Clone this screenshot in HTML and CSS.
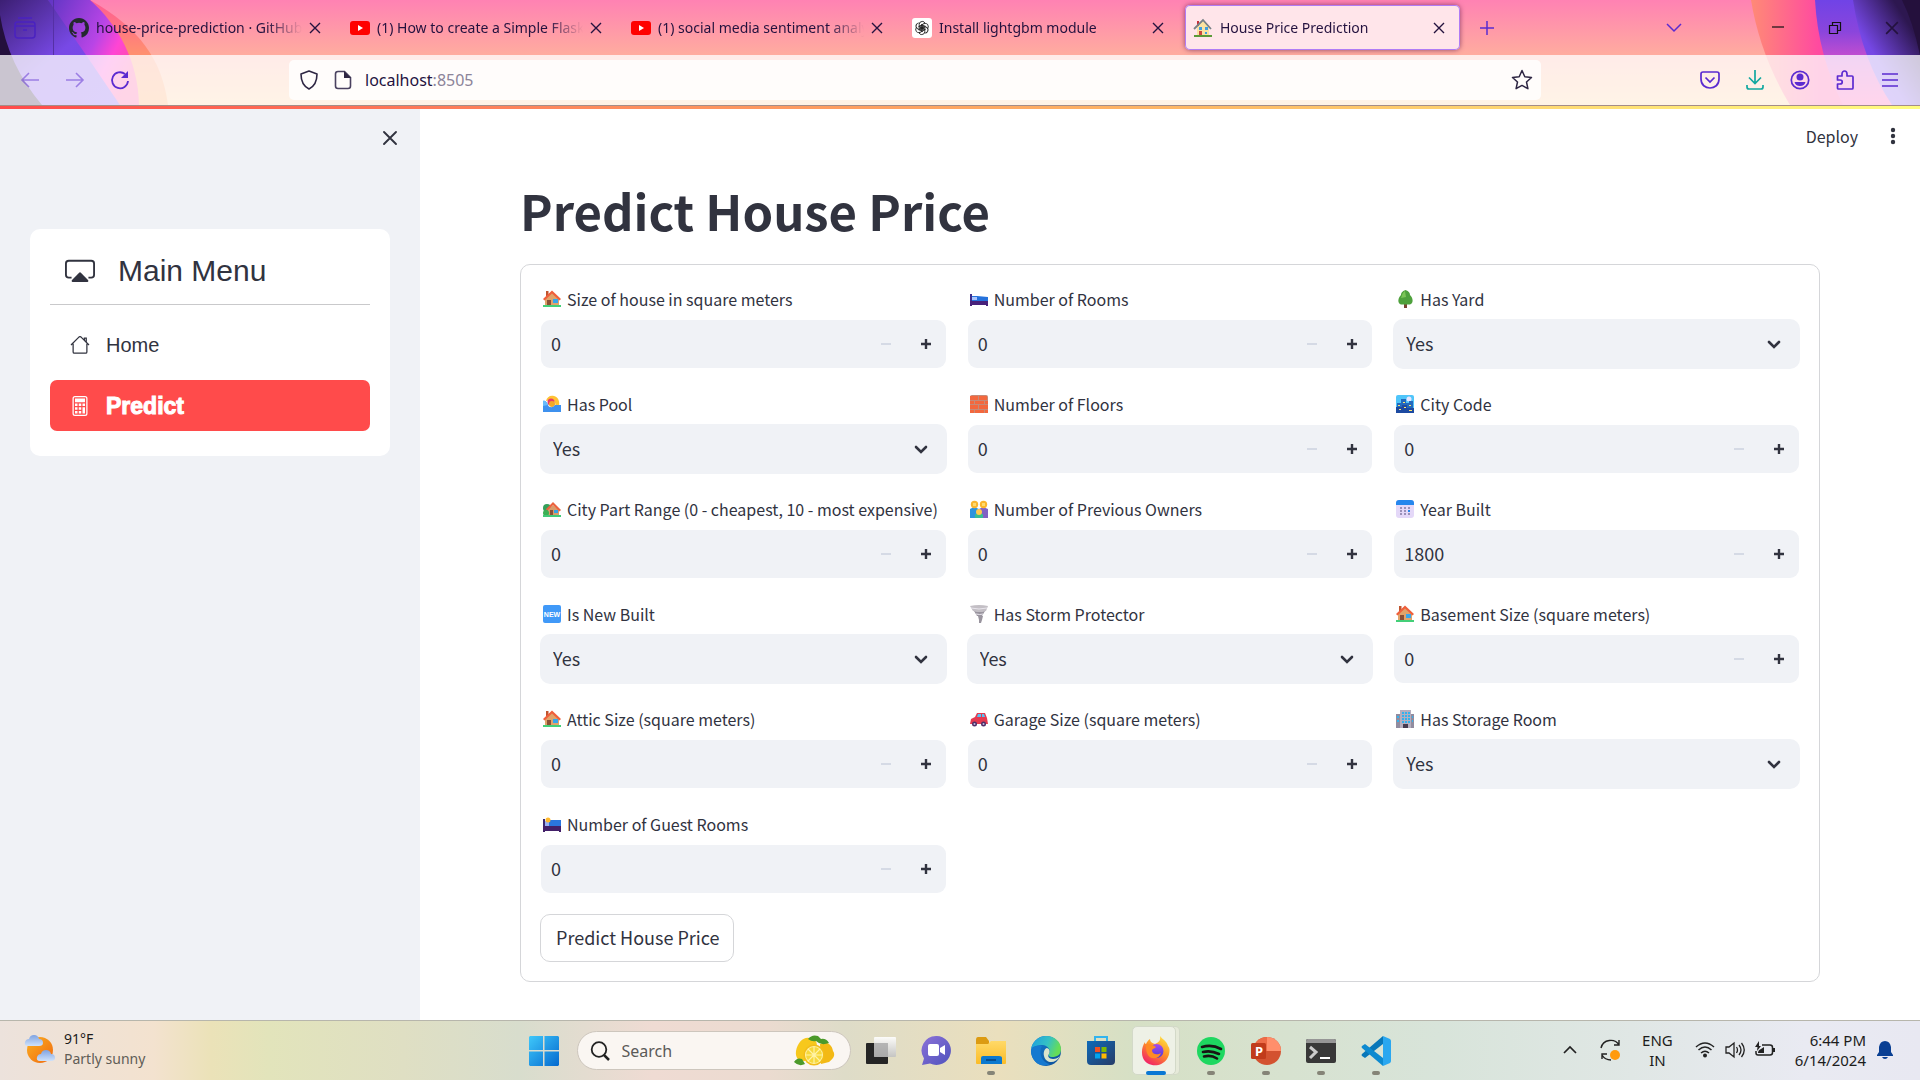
FILE: index.html
```html
<!DOCTYPE html>
<html lang="en">
<head>
<meta charset="utf-8">
<title>House Price Prediction</title>
<link rel="stylesheet" href="styles.css">
</head>
<body>
<svg class="defs" aria-hidden="true">
  <defs>
    <linearGradient id="violet" x1="0" y1="0" x2="1" y2="1"><stop offset="0" stop-color="#3c1f73"/><stop offset=".5" stop-color="#7849e6"/><stop offset="1" stop-color="#7b4bee"/></linearGradient>
    <linearGradient id="magenta" x1="0" y1="0" x2="1" y2=".6"><stop offset="0" stop-color="#5f35c4"/><stop offset=".55" stop-color="#b845e6"/><stop offset=".75" stop-color="#ff45d4"/><stop offset="1" stop-color="#ff4f9a"/></linearGradient>
    <linearGradient id="coral" x1="0" y1="0" x2="0" y2="1"><stop offset="0" stop-color="#ff5a94"/><stop offset=".5" stop-color="#ff8f70"/><stop offset="1" stop-color="#ffa860"/></linearGradient>
    <linearGradient id="hot" x1="0" y1="0" x2="1" y2="0"><stop offset="0" stop-color="#ff8a76"/><stop offset=".4" stop-color="#ff4aa0"/><stop offset="1" stop-color="#ff4aa0"/></linearGradient>
    <linearGradient id="plum" x1="0" y1="0" x2="0" y2="1"><stop offset="0" stop-color="#7043e6"/><stop offset=".3" stop-color="#8a45dc"/><stop offset=".6" stop-color="#d050cc"/><stop offset="1" stop-color="#ff50b0"/></linearGradient>
    <linearGradient id="deep" x1="1" y1="0" x2="0" y2="1"><stop offset=".2" stop-color="#2d1750"/><stop offset=".6" stop-color="#7547e4"/><stop offset="1" stop-color="#8a55ff"/></linearGradient>
    <linearGradient id="win" x1="0" y1="0" x2="1" y2="1"><stop offset="0" stop-color="#3fc8fa"/><stop offset="1" stop-color="#0469cf"/></linearGradient>
    <linearGradient id="sun" x1="0" y1="0" x2="1" y2="1"><stop offset="0" stop-color="#fbb022"/><stop offset="1" stop-color="#f0690f"/></linearGradient>
    <linearGradient id="cloud" x1="0" y1="0" x2="0" y2="1"><stop offset="0" stop-color="#7fa3e2"/><stop offset="1" stop-color="#cfe2fb"/></linearGradient>
    <linearGradient id="chat" x1="0" y1="0" x2="1" y2="1"><stop offset="0" stop-color="#8c72d8"/><stop offset="1" stop-color="#4f52bd"/></linearGradient>
    <linearGradient id="folder" x1="0" y1="0" x2="0" y2="1"><stop offset="0" stop-color="#ffd968"/><stop offset="1" stop-color="#fbbc27"/></linearGradient>
    <linearGradient id="edgeA" x1="0" y1="0" x2="1" y2=".3"><stop offset="0" stop-color="#1b9de2"/><stop offset=".6" stop-color="#35c1c4"/><stop offset="1" stop-color="#66dd57"/></linearGradient>
    <linearGradient id="edgeB" x1="0" y1="0" x2="1" y2="1"><stop offset="0" stop-color="#1583d8"/><stop offset="1" stop-color="#0c4a94"/></linearGradient>
    <linearGradient id="store" x1="0" y1="0" x2="1" y2="1"><stop offset="0" stop-color="#0f6ab8"/><stop offset="1" stop-color="#273c68"/></linearGradient>
    <linearGradient id="fox" x1=".8" y1="0" x2=".2" y2="1"><stop offset="0" stop-color="#ffe443"/><stop offset=".45" stop-color="#ff9125"/><stop offset="1" stop-color="#f0186e"/></linearGradient>
    <linearGradient id="globe" x1="0" y1="0" x2="0" y2="1"><stop offset="0" stop-color="#a54bf0"/><stop offset="1" stop-color="#4e3ad4"/></linearGradient>
    <linearGradient id="view" x1="0" y1="0" x2="0" y2="1"><stop offset="0" stop-color="#ffffff"/><stop offset="1" stop-color="#c2c2c2"/></linearGradient>

    <symbol id="x" viewBox="0 0 12 12"><path d="M1 1l10 10M11 1L1 11" fill="none" stroke="currentColor" stroke-width="1.4"/></symbol>
    <symbol id="youtube" viewBox="0 0 20 20"><rect y="3" width="20" height="14" rx="3" fill="#f00"/><path d="M8 7l5 3-5 3z" fill="#fff"/></symbol>
    <symbol id="minus" viewBox="0 0 10 10"><path d="M0 5h10" stroke="currentColor" stroke-width="2"/></symbol>
    <symbol id="plus" viewBox="0 0 10 10"><path d="M0 5h10M5 0v10" stroke="currentColor" stroke-width="2.4"/></symbol>
    <symbol id="down" viewBox="0 0 14 9"><path d="M2 2l5 5 5-5" fill="none" stroke="currentColor" stroke-width="2.600" stroke-linecap="round"/></symbol>

    <symbol id="e-house" viewBox="0 0 18 18"><path d="M3 1h2.500v5H3z" fill="#c0552f"/><path d="M2 8l7-6 7 6v8H2z" fill="#e0a36a"/><path d="M0 9l9-8.500L18 9l-1.500 1.500L9 3.600 1.500 10.500z" fill="#ef5f3c"/><path d="M4 10h4v6H4z" fill="#8a4f36"/><path d="M10 9h5v4h-5z" fill="#38a5ea"/><path d="M0 15h18v2H0z" fill="#44cf78"/></symbol>
    <symbol id="e-garden" viewBox="0 0 18 18"><circle cx="4" cy="8" r="4" fill="#35a05a"/><path d="M5 9l5-4 6 5v6H5z" fill="#d99b69"/><path d="M3 9l7-7 8 8-1.500 1.500L10 5l-6 6z" fill="#ec623f"/><path d="M7 10h3v6H7z" fill="#8a5038"/><path d="M11 10h4v3h-4z" fill="#36a2e4"/><circle cx="3" cy="13" r="3" fill="#3bb054"/><path d="M0 15h18v2H0z" fill="#42c978"/></symbol>
    <symbol id="e-bed" viewBox="0 0 18 18"><path d="M0 4h2v11H0z" fill="#3c2f8d"/><path d="M2 6h5l11 1v5H2z" fill="#2572dc"/><path d="M2 7h5v3H2z" fill="#a9c6ff"/><path d="M0 11h18v5h-2v-1H2v1H0z" fill="#48217a"/></symbol>
    <symbol id="e-guest" viewBox="0 0 18 18"><path d="M0 4h2v12H0z" fill="#3c2a70"/><path d="M2 6h4v6H2z" fill="#9ab1f4"/><path d="M6 5h12v7H6z" fill="#2a76de"/><circle cx="5" cy="5" r="2.500" fill="#ffb92e"/><path d="M0 11h18v6h-2v-1H2v1H0z" fill="#432069"/></symbol>
    <symbol id="e-tree" viewBox="0 0 18 18"><path d="M8 12h3v6H8z" fill="#7a4434"/><path d="M9.500 0C6 1 5 3 5 5c-4 4-3 9 0 9.500h9c3-.5 4-5.500 0-9.500 0-2-1-4-4.500-5z" fill="#4ea13c"/><path d="M9 1C6 3 6 6 5 8l5-1z" fill="#7bc557"/></symbol>
    <symbol id="e-pool" viewBox="0 0 18 18"><path d="M3 6C4 2 7 0 11 1c4 1 6 5 5 10l-4 1c1-3 0-6-3-7z" fill="#ffc233"/><circle cx="8" cy="7" r="3.500" fill="#e73c68"/><circle cx="9" cy="9" r="3" fill="#f2a928"/><path d="M0 6c2-1 4 1 5 4s5 3 7 0h6v7H0z" fill="#3e91ee"/><path d="M0 6c2-1 4 1 5 4l-5 1z" fill="#68bbfa"/></symbol>
    <symbol id="e-brick" viewBox="0 0 18 18"><rect width="18" height="18" rx="2" fill="#c58a78"/><path d="M0 1h8v4H0zM9 1h8v4H9zM0 6h4v3H0zM5 6h9v3H5zM15 6h3v3h-3zM0 10h8v4H0zM9 10h9v4H9zM0 15h4v3H0zM5 15h9v3H5zM15 15h3v3h-3z" fill="#f3683e"/></symbol>
    <symbol id="e-city" viewBox="0 0 18 18"><rect width="18" height="18" rx="2" fill="#4fc5fa"/><circle cx="13" cy="4" r="2.500" fill="#e8e5ff"/><path d="M1 8h4V4h5v4h3V6h4v12H1z" fill="#2369bd"/><path d="M0 12h6v-2h5v3h7v5H0z" fill="#1c4aa1"/><path d="M2 10h2v1H2zM7 7h2v1H7zM13 10h2v1h-2zM8 12h2v1H8zM3 14h2v1H3zM13 15h3v1h-3z" fill="#ffe36c"/></symbol>
    <symbol id="e-family" viewBox="0 0 18 18"><path d="M0 9l4-2 5 2v9H0z" fill="#2c93dd"/><path d="M9 9l4-2 5 2v9H9z" fill="#8161c4"/><circle cx="4.500" cy="4.500" r="3.700" fill="#f9b630"/><circle cx="13.500" cy="4.500" r="3.700" fill="#fcb52c"/><path d="M3 3h3v3H3zM12 3h3v3h-3z" fill="#ffda6e"/><path d="M5 14h8v4H5z" fill="#38bd93"/><circle cx="9" cy="12" r="3" fill="#ffc94c"/></symbol>
    <symbol id="e-calendar" viewBox="0 0 18 18"><rect width="18" height="18" rx="3" fill="#e4d8f8"/><path d="M0 5V3q0-3 3-3h12q3 0 3 3v2z" fill="#2586ed"/><path d="M4 7h2v2H4zM8 7h2v2H8zM12 7h2v2h-2zM4 10h2v2H4zM8 10h2v2H8zM4 13h2v2H4zM8 13h2v2H8zM12 13h2v2h-2z" fill="#9b91b9"/><path d="M12 10h2v2h-2z" fill="#2586ed"/></symbol>
    <symbol id="e-new" viewBox="0 0 18 18"><rect width="18" height="18" rx="2" fill="#4099f8"/><text x="9" y="12" class="new-sign">NEW</text></symbol>
    <symbol id="e-storm" viewBox="0 0 18 18"><path d="M0 1q9-2 18 0l-2 5q-6 2-13 0z" fill="#c3bfc5"/><path d="M4 6q6 2 11 0l-3 5H7zM8 11h5l-1 4H9zM9 15h3l-1 3H9z" fill="#99949e"/><path d="M1 3q8 2 16 0M6 9q4 1 7 0" fill="none" stroke="#e9e6ed"/></symbol>
    <symbol id="e-car" viewBox="0 0 18 18"><path d="M1 9l4-2 2-4h8l2 5 1 6H0z" fill="#e43a50"/><path d="M7 7l1-3h3v3zM12 4h2l1 3h-3z" fill="#54c2f3"/><circle cx="4.500" cy="14" r="2.500" fill="#4d2f68"/><circle cx="13.500" cy="14" r="2.500" fill="#4d2f68"/><circle cx="4.500" cy="14" r="1" fill="#c7b8dd"/><circle cx="13.500" cy="14" r="1" fill="#c7b8dd"/></symbol>
    <symbol id="e-office" viewBox="0 0 18 18"><path d="M0 4h18v14H0z" fill="#918c9f"/><path d="M4 0h11v18H4z" fill="#b5aebf"/><path d="M6 2h2v2H6zM9 2h2v2H9zM12 2h2v2h-2zM6 5h2v2H6zM9 5h2v2H9zM12 5h2v2h-2zM6 8h2v2H6zM9 8h2v2H9zM12 8h2v2h-2zM6 11h2v2H6zM9 11h2v2H9zM12 11h2v2h-2zM1 6h2v2H1zM1 10h2v2H1zM16 6h1v2h-1zM16 10h1v2h-1z" fill="#33b2ee"/><path d="M7 14h5v4H7z" fill="#453b50"/></symbol>
  </defs>
</svg>

<header class="browser">
  <svg class="theme theme-left" width="170" height="105" aria-hidden="true">
    <path d="M70 0H90C140 28 162 60 168 105H70z" fill="url(#coral)"/>
    <path d="M48 0H90C118 25 138 60 139 105H60z" fill="url(#magenta)"/>
    <path d="M0 0H48L86 55 120 105H0z" fill="url(#violet)"/>
    <path d="M0 15Q8 65 42 105H0z" fill="#24103c"/>
  </svg>
  <svg class="theme theme-right" width="170" height="105" aria-hidden="true">
    <path d="M1 0H170V105H40Q10 55 1 0z" fill="url(#hot)"/>
    <path d="M65 0H170V105H93Q68 55 65 0z" fill="url(#plum)"/>
    <path d="M103 0H170V105H142Q112 60 103 0z" fill="url(#deep)"/>
    <path d="M152 0H170V55Q163 22 152 0z" fill="#24103c"/>
  </svg>

  <div class="tabstrip">
    <button class="recent" aria-label="Recent browsing"><svg width="22" height="22" viewBox="0 0 22 22" fill="none" stroke="#4a22c0" stroke-width="1.500"><path d="M4 1h14M3 5h16q2 0 2 3v10q0 3-3 3H4q-3 0-3-3V8q0-3 2-3zM1 9h20M9 13h4"/></svg></button>
    <nav class="tabs" aria-label="Tabs">
      <div class="tab"><svg width="20" height="20" viewBox="0 0 16 16"><path fill="#24292f" d="M8 0C3.580 0 0 3.580 0 8c0 3.540 2.290 6.530 5.470 7.590.4.070.55-.17.55-.38 0-.19-.01-.82-.01-1.490-2.010.37-2.530-.49-2.690-.94-.09-.23-.48-.94-.82-1.130-.28-.15-.68-.52-.01-.53.63-.01 1.080.58 1.230.82.720 1.210 1.870.87 2.330.66.070-.52.280-.87.510-1.070-1.780-.2-3.640-.89-3.640-3.950 0-.87.310-1.590.820-2.150-.08-.2-.36-1.020.08-2.120 0 0 .67-.21 2.200.82a7.600 7.600 0 0 1 4 0c1.530-1.040 2.200-.82 2.200-.82.440 1.100.160 1.920.080 2.120.510.560.820 1.270.820 2.150 0 3.070-1.870 3.750-3.650 3.950.290.250.540.730.540 1.480 0 1.070-.01 1.930-.01 2.200 0 .21.150.46.550.38A8 8 0 0 0 16 8c0-4.420-3.580-8-8-8z"/></svg><a class="tab-name" href="#">house-price-prediction · GitHub</a><button class="tab-close" aria-label="Close tab"><svg width="12" height="12"><use href="#x"/></svg></button></div>
      <div class="tab"><svg width="20" height="20"><use href="#youtube"/></svg><a class="tab-name" href="#">(1) How to create a Simple Flask</a><button class="tab-close" aria-label="Close tab"><svg width="12" height="12"><use href="#x"/></svg></button></div>
      <div class="tab"><svg width="20" height="20"><use href="#youtube"/></svg><a class="tab-name" href="#">(1) social media sentiment analy</a><button class="tab-close" aria-label="Close tab"><svg width="12" height="12"><use href="#x"/></svg></button></div>
      <div class="tab"><svg width="20" height="20" viewBox="0 0 20 20"><rect width="20" height="20" rx="3" fill="#fff"/><g fill="none" stroke="#222" stroke-width=".9"><path id="petal" d="M7.200 12.500V6.300q.3-2.800 3-2.900 2 0 3 1.800M7.200 8l5.200 3"/><use href="#petal" transform="rotate(60 10 10)"/><use href="#petal" transform="rotate(120 10 10)"/><use href="#petal" transform="rotate(180 10 10)"/><use href="#petal" transform="rotate(240 10 10)"/><use href="#petal" transform="rotate(300 10 10)"/></g></svg><a class="tab-name" href="#">Install lightgbm module</a><button class="tab-close" aria-label="Close tab"><svg width="12" height="12"><use href="#x"/></svg></button></div>
      <div class="tab tab-active"><svg width="20" height="20" viewBox="0 0 20 20"><path d="M4 8l6-5 6 5v10H4z" fill="#fbe3a2"/><path d="M4 3h2v5H4z" fill="#c62f3a"/><path d="M1 11l9-9 8 9" fill="none" stroke="#788086" stroke-width="1.800"/><path d="M6 9h3v3H6zM12 9h3v3h-3zM12 14h2v2h-2z" fill="#3f9ee0"/><path d="M6 13h3v5H6z" fill="#c9473e"/><path d="M1 17h18v2H1z" fill="#5b9a38"/></svg><a class="tab-name" href="#" aria-current="page">House Price Prediction</a><button class="tab-close" aria-label="Close tab"><svg width="12" height="12"><use href="#x"/></svg></button></div>
    </nav>
    <button class="tool new-tab" aria-label="New tab"><svg width="16" height="16" viewBox="0 0 16 16"><path d="M1 8h14M8 1v14" stroke="currentColor" stroke-width="1.500"/></svg></button>
    <button class="tool list-tabs" aria-label="List all tabs"><svg width="16" height="16" viewBox="0 0 16 16"><path d="M1 4l7 7 7-7" fill="none" stroke="currentColor" stroke-width="1.500"/></svg></button>
    <div class="window-buttons">
      <button aria-label="Minimize"><svg width="12" height="12"><path d="M0 5h12" stroke="#111" stroke-width="1.200"/></svg></button>
      <button aria-label="Restore"><svg width="14" height="14" viewBox="0 0 14 14"><path d="M1.500 4.500h8v8h-8zM4.500 4.500v-3h8v8h-3" fill="none" stroke="#111" stroke-width="1.200"/></svg></button>
      <button aria-label="Close window"><svg width="14" height="14"><use href="#x"/></svg></button>
    </div>
  </div>

  <div class="navbar">
    <button class="tool faded" aria-label="Back"><svg width="20" height="20" viewBox="0 0 20 20"><path d="M19 10H2M9 3l-7 7 7 7" fill="none" stroke="currentColor" stroke-width="1.600"/></svg></button>
    <button class="tool faded" aria-label="Forward"><svg width="20" height="20" viewBox="0 0 20 20"><path d="M1 10h17M11 3l7 7-7 7" fill="none" stroke="currentColor" stroke-width="1.600"/></svg></button>
    <button class="tool" aria-label="Reload"><svg width="20" height="20" viewBox="0 0 20 20"><path d="M18 11a8 8 0 1 1-3-7" fill="none" stroke="currentColor" stroke-width="1.800"/><path d="M18 1v7h-7z" fill="currentColor"/></svg></button>
    <div class="urlbar">
      <svg width="20" height="20" viewBox="0 0 20 20"><path d="M10 1l8 3c0 7-2 12-8 15C4 16 2 11 2 4z" fill="none" stroke="#2e2643" stroke-width="1.600" stroke-linejoin="round"/></svg>
      <svg width="20" height="20" viewBox="0 0 20 20"><path d="M5 1.500h6.500l6 6V16q0 2.500-2.500 2.500H5Q2.500 18.500 2.500 16V4Q2.500 1.500 5 1.500z" fill="none" stroke="#4a4260" stroke-width="1.600"/><path d="M11 1l7 7h-7z" fill="#2e2643"/></svg>
      <a class="address" href="#">localhost<span>:8505</span></a>
      <svg width="22" height="22" viewBox="0 0 22 22"><path d="M11 1.500l2.800 6.200 6.700.8-5 4.500 1.400 6.700L11 16.400l-5.900 3.300L6.500 13l-5-4.500 6.700-.8z" fill="none" stroke="#2e2643" stroke-width="1.500" stroke-linejoin="round"/></svg>
    </div>
    <button class="tool" aria-label="Save to Pocket"><svg width="20" height="20" viewBox="0 0 20 20" fill="none" stroke="currentColor" stroke-width="1.700"><path d="M3 2h14q2 0 2 2v5c0 12-18 12-18 0V4q0-2 2-2zM5.500 7.500L10 12l4.500-4.500"/></svg></button>
    <button class="tool download" aria-label="Downloads"><svg width="20" height="20" viewBox="0 0 20 20" fill="none" stroke="currentColor" stroke-width="1.700"><path d="M10 0v13M4 7.500l6 6 6-6M2 15v2q0 2 2 2h12q2 0 2-2v-2"/></svg></button>
    <button class="tool" aria-label="Account"><svg width="20" height="20" viewBox="0 0 20 20"><circle cx="10" cy="10" r="8.700" fill="none" stroke="currentColor" stroke-width="1.700"/><circle cx="10" cy="7" r="3.500" fill="currentColor"/><path d="M4.500 12h11q-1 4-5.500 4t-5.500-4z" fill="currentColor"/></svg></button>
    <button class="tool" aria-label="Extensions"><svg width="20" height="20" viewBox="0 0 20 20"><path d="M2.500 6H7V4c0-4 5-4 5 0v2h5q1 0 1 1v11q0 1-1 1H3.500q-1 0-1-1v-4H5c3 0 3-4 0-4H2.500z" fill="none" stroke="currentColor" stroke-width="1.700" stroke-linejoin="round"/></svg></button>
    <button class="tool" aria-label="Menu"><svg width="16" height="16" viewBox="0 0 16 16"><path d="M0 2h16M0 8h16M0 14h16" stroke="currentColor" stroke-width="1.600"/></svg></button>
  </div>
</header>

<div class="app">
  <aside class="sidebar">
    <div class="sidebar-top"><button aria-label="Close sidebar"><svg width="20" height="20" viewBox="0 0 20 20"><path d="M4 4l12 12M16 4L4 16" stroke="currentColor" stroke-width="1.900" stroke-linecap="round"/></svg></button></div>
    <nav class="menu" aria-labelledby="menu-title">
      <div class="menu-head"><svg width="30" height="30" viewBox="0 0 16 16"><path d="M3.500 11.500H2Q.5 11.500.5 10V4Q.5 2.500 2 2.500h12q1.500 0 1.500 1.500v6q0 1.500-1.500 1.500h-1.500" fill="none" stroke="currentColor"/><path d="M8 8.700q.3 0 .6.300l3.800 3.900q.2 1-.5 1H4.100q-.7 0-.5-1L7.400 9Q7.700 8.700 8 8.700z" fill="currentColor"/></svg><h2 id="menu-title">Main Menu</h2></div>
      <hr>
      <a class="menu-item" href="#"><svg width="20" height="20" viewBox="0 0 16 16"><path d="M.8 8L7.300 1.500q.7-.5 1.400 0L15.200 8M2.500 7v6.500q0 1 1 1h9q1 0 1-1V7M11.500 4V2.500h1.500v3.200" fill="none" stroke="currentColor"/></svg><span>Home</span></a>
      <a class="menu-item menu-current" href="#" aria-current="page"><svg width="20" height="20" viewBox="0 0 16 16"><rect x="2.500" y=".5" width="11" height="15" rx="1.500" fill="none" stroke="currentColor"/><path d="M4 2h8v3H4zM4 6h2v2H4zM7 6h2v2H7zM10 6h2v2h-2zM4 9h2v2H4zM7 9h2v2H7zM4 12h2v2H4zM7 12h2v2H7zM10 9h2v5h-2z" fill="currentColor"/></svg><span>Predict</span></a>
    </nav>
  </aside>

  <main class="main">
    <div class="main-bar">
      <button class="deploy">Deploy</button>
      <button aria-label="More options"><svg width="6" height="18" viewBox="0 0 6 18" fill="currentColor"><circle cx="3" cy="3" r="2.200"/><circle cx="3" cy="9" r="2.200"/><circle cx="3" cy="15" r="2.200"/></svg></button>
    </div>
    <h1>Predict House Price</h1>
    <form class="form">
      <div class="fields">
        <div class="field"><label for="size"><svg><use href="#e-house"/></svg>Size of house in square meters</label><div class="number"><input id="size" type="number" value="0"><button type="button" disabled aria-label="Decrease"><svg><use href="#minus"/></svg></button><button type="button" aria-label="Increase"><svg><use href="#plus"/></svg></button></div></div>
        <div class="field"><label for="rooms"><svg><use href="#e-bed"/></svg>Number of Rooms</label><div class="number"><input id="rooms" type="number" value="0"><button type="button" disabled aria-label="Decrease"><svg><use href="#minus"/></svg></button><button type="button" aria-label="Increase"><svg><use href="#plus"/></svg></button></div></div>
        <div class="field"><label for="yard"><svg><use href="#e-tree"/></svg>Has Yard</label><div class="choice"><select id="yard"><option>Yes</option><option>No</option></select><svg><use href="#down"/></svg></div></div>
        <div class="field"><label for="pool"><svg><use href="#e-pool"/></svg>Has Pool</label><div class="choice"><select id="pool"><option>Yes</option><option>No</option></select><svg><use href="#down"/></svg></div></div>
        <div class="field"><label for="floors"><svg><use href="#e-brick"/></svg>Number of Floors</label><div class="number"><input id="floors" type="number" value="0"><button type="button" disabled aria-label="Decrease"><svg><use href="#minus"/></svg></button><button type="button" aria-label="Increase"><svg><use href="#plus"/></svg></button></div></div>
        <div class="field"><label for="city"><svg><use href="#e-city"/></svg>City Code</label><div class="number"><input id="city" type="number" value="0"><button type="button" disabled aria-label="Decrease"><svg><use href="#minus"/></svg></button><button type="button" aria-label="Increase"><svg><use href="#plus"/></svg></button></div></div>
        <div class="field"><label for="range"><svg><use href="#e-garden"/></svg>City Part Range (0 - cheapest, 10 - most expensive)</label><div class="number"><input id="range" type="number" value="0"><button type="button" disabled aria-label="Decrease"><svg><use href="#minus"/></svg></button><button type="button" aria-label="Increase"><svg><use href="#plus"/></svg></button></div></div>
        <div class="field"><label for="owners"><svg><use href="#e-family"/></svg>Number of Previous Owners</label><div class="number"><input id="owners" type="number" value="0"><button type="button" disabled aria-label="Decrease"><svg><use href="#minus"/></svg></button><button type="button" aria-label="Increase"><svg><use href="#plus"/></svg></button></div></div>
        <div class="field"><label for="year"><svg><use href="#e-calendar"/></svg>Year Built</label><div class="number"><input id="year" type="number" value="1800"><button type="button" disabled aria-label="Decrease"><svg><use href="#minus"/></svg></button><button type="button" aria-label="Increase"><svg><use href="#plus"/></svg></button></div></div>
        <div class="field"><label for="new"><svg><use href="#e-new"/></svg>Is New Built</label><div class="choice"><select id="new"><option>Yes</option><option>No</option></select><svg><use href="#down"/></svg></div></div>
        <div class="field"><label for="storm"><svg><use href="#e-storm"/></svg>Has Storm Protector</label><div class="choice"><select id="storm"><option>Yes</option><option>No</option></select><svg><use href="#down"/></svg></div></div>
        <div class="field"><label for="basement"><svg><use href="#e-house"/></svg>Basement Size (square meters)</label><div class="number"><input id="basement" type="number" value="0"><button type="button" disabled aria-label="Decrease"><svg><use href="#minus"/></svg></button><button type="button" aria-label="Increase"><svg><use href="#plus"/></svg></button></div></div>
        <div class="field"><label for="attic"><svg><use href="#e-house"/></svg>Attic Size (square meters)</label><div class="number"><input id="attic" type="number" value="0"><button type="button" disabled aria-label="Decrease"><svg><use href="#minus"/></svg></button><button type="button" aria-label="Increase"><svg><use href="#plus"/></svg></button></div></div>
        <div class="field"><label for="garage"><svg><use href="#e-car"/></svg>Garage Size (square meters)</label><div class="number"><input id="garage" type="number" value="0"><button type="button" disabled aria-label="Decrease"><svg><use href="#minus"/></svg></button><button type="button" aria-label="Increase"><svg><use href="#plus"/></svg></button></div></div>
        <div class="field"><label for="storage"><svg><use href="#e-office"/></svg>Has Storage Room</label><div class="choice"><select id="storage"><option>Yes</option><option>No</option></select><svg><use href="#down"/></svg></div></div>
        <div class="field"><label for="guest"><svg><use href="#e-guest"/></svg>Number of Guest Rooms</label><div class="number"><input id="guest" type="number" value="0"><button type="button" disabled aria-label="Decrease"><svg><use href="#minus"/></svg></button><button type="button" aria-label="Increase"><svg><use href="#plus"/></svg></button></div></div>
      </div>
      <button class="submit" type="button">Predict House Price</button>
    </form>
  </main>
</div>

<footer class="taskbar">
  <div class="weather">
    <svg width="32" height="30" viewBox="0 0 32 30"><circle cx="16" cy="16" r="13" fill="url(#sun)"/><path d="M4 12q-4 0-3-4 1-3 4-3 1-4 5-4t5 4q4 0 4 4 0 3-4 3z" fill="url(#cloud)"/><path d="M16 27q-4 0-3-4 1-3 4-3 1-4 5-4t5 4q4 0 4 4 0 3-4 3z" fill="url(#cloud)"/></svg>
    <div><p>91°F</p><p class="muted">Partly sunny</p></div>
  </div>
  <div class="apps">
    <button aria-label="Start"><svg width="30" height="30" viewBox="0 0 30 30"><path d="M1 0h13v14H0V1zM15.500 0H29l1 1v13H15.500zM0 15.500h14V30H1l-1-1zM15.500 15.500H30V29l-1 1H15.500z" fill="url(#win)"/></svg></button>
    <div class="search">
      <svg width="20" height="20" viewBox="0 0 20 20"><circle cx="9" cy="8.500" r="7.300" fill="none" stroke="#222" stroke-width="1.800"/><path d="M14 14l5 5" stroke="#222" stroke-width="2.500"/></svg>
      <input type="text" placeholder="Search" aria-label="Search">
      <svg width="46" height="32" viewBox="0 0 46 32"><path d="M4 16C6 5 14 0 20 4c6 1 6 8 3 14s-8 8-12 8-8-3-7-10z" fill="#f7c81c"/><path d="M28 9c6-4 12 0 13 7 3 4 0 8-4 11l-8 2z" fill="#f3b915"/><path d="M16 4q4-5 10-3l3 3q5-1 8 4-8 3-13-2-4 1-8-2zM2 27q3-5 8-3l3 5q-6 3-11-2z" fill="#4c9a2b"/><circle cx="22" cy="20" r="10.500" fill="#f2bd1b"/><circle cx="22" cy="20" r="9" fill="#fff3a8"/><circle cx="22" cy="20" r="8" fill="#f6d83c"/><path d="M22 12v16M14 20h16M16 14l12 12M28 14L16 26" stroke="#fff3a8" stroke-width="1.200"/></svg>
    </div>
    <button aria-label="Task view"><svg width="30" height="30" viewBox="0 0 30 30"><rect x="0" y="7" width="22" height="21" rx="1" fill="#252525"/><rect x="8" y="1" width="22" height="20" rx="1" fill="url(#view)" opacity=".9"/><path d="M8 7h14v14H8z" fill="#a5a5a5" opacity=".7"/></svg></button>
    <button aria-label="Chat"><svg width="30" height="30" viewBox="0 0 30 30"><path d="M15 0a14.500 14.500 0 1 1-6 27.500L1 29l2-6.500A14.500 14.500 0 0 1 15 0z" fill="url(#chat)"/><rect x="7" y="8" width="11" height="12" rx="2" fill="#fff"/><path d="M19 12l5-3v10l-5-3z" fill="#fff"/></svg></button>
    <button class="running" aria-label="File Explorer"><svg width="30" height="30" viewBox="0 0 30 30"><path d="M0 4q0-3 2-3h8l3 4v5H0z" fill="#dc9b12"/><path d="M0 8h12l3-3h15v22q0 1-1 1H1q-1 0-1-1z" fill="url(#folder)"/><path d="M5 28v-6q0-2 2-2h16q3 0 3 2v6z" fill="#0c79cf"/><path d="M10 24h10" stroke="#06407c" stroke-width="1.500"/></svg></button>
    <button aria-label="Edge"><svg width="30" height="30" viewBox="0 0 30 30"><circle cx="15" cy="15" r="15" fill="url(#edgeB)"/><path d="M0 13C2 4 9 0 15 0c9 0 15 6 15 13 0 6-4 8-9 8-3 0-4-2-3-3 2-3 0-8-6-9-5 0-10 1-12 4z" fill="url(#edgeA)"/><path d="M18 18c-2 2 0 5 4 5 3 0 5-1 7-3-4 8-14 8-16 0-1-4 1-8 3-8 3 1 3 4 2 6z" fill="#dbe3cc"/><path d="M11 10c-4 7 0 17 8 18-10 5-19-3-19-14 2-4 7-5 11-4z" fill="#1679d0"/></svg></button>
    <button aria-label="Microsoft Store"><svg width="30" height="30" viewBox="0 0 30 30"><path d="M9 6V1h12v5" fill="none" stroke="#32b4ee" stroke-width="2"/><path d="M1 5h28v20q0 4-4 4H5q-4 0-4-4z" fill="url(#store)"/><path d="M9 11h5v5H9z" fill="#f25022"/><path d="M15.500 11h5v5h-5z" fill="#7fba00"/><path d="M9 17.500h5v5H9z" fill="#00a4ef"/><path d="M15.500 17.500h5v5h-5z" fill="#ffb900"/></svg></button>
    <button class="focused" aria-label="Firefox"><svg width="30" height="30" viewBox="0 0 30 30"><path d="M19 0c2 3 7 5 8 10 3 3 1 10-1 13-6 9-20 8-24-1C0 17 1 10 4 6c0 1 0 2 1 2 1-2 2-4 4-5 0 3 2 4 5 5 3-1 6-3 5-8z" fill="url(#fox)"/><circle cx="15.500" cy="15" r="7" fill="url(#globe)"/><path d="M5 9c4-2 7 0 10 2-1 2-4 1-4 4 1 4 6 4 9 2-2 7-12 7-14 0-1-3-1-5-1-8z" fill="#ff8a24"/></svg></button>
    <button class="running" aria-label="Spotify"><svg width="30" height="30" viewBox="0 0 30 30"><circle cx="15" cy="15" r="14" fill="#1ed760"/><path d="M6 11q10-3 19 2M7 16q8-2 16 2M8 20.500q7-2 13 2" fill="none" stroke="#191414" stroke-width="2.600" stroke-linecap="round"/></svg></button>
    <button class="running" aria-label="PowerPoint"><svg width="30" height="30" viewBox="0 0 30 30"><circle cx="16" cy="15" r="14" fill="#d35230"/><path d="M16 1a14 14 0 0 1 14 14H16z" fill="#ff8f6b"/><path d="M16 1A14 14 0 0 0 2 15h14z" fill="#ed6c47"/><rect y="7" width="15" height="16" rx="1.500" fill="#c13b1b"/><text x="4" y="20" class="glyph">P</text></svg></button>
    <button class="running" aria-label="Terminal"><svg width="30" height="30" viewBox="0 0 30 30"><rect y="3" width="30" height="24" rx="2" fill="#383838"/><path d="M0 7V5q0-2 2-2h26q2 0 2 2v2z" fill="#969696"/><path d="M4 11l6 5-6 6" fill="none" stroke="#ccc" stroke-width="3"/><path d="M14 22h10" stroke="#fff" stroke-width="2"/></svg></button>
    <button class="running" aria-label="Visual Studio Code"><svg width="30" height="30" viewBox="0 0 30 30"><path d="M22 0v8L4 22l-3-2q-1-1 0-2z" fill="#0877b9"/><path d="M22 30v-8L4 8l-3 2q-1 1 0 2z" fill="#0d8ad0"/><path d="M22 0l7 3q1 1 1 2v20q0 1-1 2l-7 3z" fill="#2aa7f0"/></svg></button>
  </div>
  <div class="tray">
    <svg width="14" height="14" viewBox="0 0 14 14"><path d="M1 10l6-6 6 6" fill="none" stroke="#222" stroke-width="1.700"/></svg>
    <svg class="sync" width="20" height="22" viewBox="0 0 20 22"><path d="M1 9C3 0 15-1 19 6M19 1v5h-5M2 20v-5h5M2 16q3 5 9 5" fill="none" stroke="#222" stroke-width="1.400"/><circle cx="15" cy="16" r="5" fill="#ff9a0d"/></svg>
    <div class="lang"><p>ENG</p><p>IN</p></div>
    <div class="status">
      <svg width="20" height="20" viewBox="0 0 20 20"><path d="M1 7q9-8 18 0M3.500 10q6.500-6 13 0M6 13q4-3.500 8 0" fill="none" stroke="#222" stroke-width="1.500"/><circle cx="10" cy="15.500" r="2" fill="#222"/></svg>
      <svg width="20" height="20" viewBox="0 0 20 20"><path d="M1 7h3l5-4v14l-5-4H1zM11.500 7q2 3 0 6M14 5q4 5 0 10M16.500 3q5.500 7 0 14" fill="none" stroke="#222" stroke-width="1.300"/></svg>
      <svg width="20" height="20" viewBox="0 0 20 20"><path d="M7 5h8q2.500 0 2.500 2.500v5q0 2.500-2.500 2.500H3q-2 0-2-2v-2" fill="none" stroke="#222" stroke-width="1.500"/><path d="M18 8h2v4h-2zM3 13q0-3 3-4l3-2v6zM4 1L0 7h2.500L2 11l4-5H4z" fill="#222"/></svg>
    </div>
    <div class="clock"><p>6:44 PM</p><p>6/14/2024</p></div>
    <svg width="16" height="20" viewBox="0 0 16 20"><path d="M8 1q5 0 6 6v5l2 3v1H0v-1l2-3V7q1-6 6-6zM5 17h6q-1 2-3 2t-3-2z" fill="#0a3f93"/></svg>
  </div>
</footer>
</body>
</html>
```
FILE: styles.css
```css
* { box-sizing: border-box; }

body {
  margin: 0;
  min-height: 100vh;
  display: flex;
  flex-direction: column;
  color: #31333f;
  background: #fff;
  font-family: "Noto Sans CJK SC", "Noto Sans", sans-serif;
  font-size: 18px;
}

p, h1, h2 { margin: 0; }
a { color: inherit; text-decoration: none; }
svg { flex: none; display: block; }
.defs { position: absolute; width: 0; height: 0; }

button {
  display: flex;
  align-items: center;
  justify-content: center;
  padding: 0;
  border: 0;
  background: none;
  color: inherit;
  font: inherit;
}

/* Browser window */
.browser {
  position: relative;
  isolation: isolate;
  border-bottom: 1px solid #a58d88;
  background: linear-gradient(#ff82b3, #ffac9f 52%, #ffcf98);
  color: #24123f;
  font-family: "Noto Sans", sans-serif;
  font-size: 14px;
}
.theme { position: absolute; top: 0; z-index: -1; }
.theme-left { left: 0; }
.theme-right { right: 0; }

.tabstrip { display: flex; align-items: center; height: 55px; }
.recent { width: 54px; height: 55px; padding-right: 4px; border-right: 1px solid #5530a5; }
.tabs { display: flex; flex: 0 1 1399px; gap: 6px; margin-left: 7px; min-width: 0; }
.tab {
  flex: 1 1 0;
  min-width: 0;
  height: 45px;
  display: flex;
  align-items: center;
  gap: 7px;
  padding: 0 15px 0 8px;
  border-radius: 5px;
}
.tab-active {
  background: #ffe5ea;
  box-shadow: 0 0 0 1px #b07cf5 inset, 0 0 5px rgba(70, 10, 60, .6);
}
.tab-name {
  flex: 1;
  min-width: 0;
  overflow: hidden;
  white-space: nowrap;
  line-height: 24px;
  -webkit-mask-image: linear-gradient(to left, transparent, #000 36px);
  mask-image: linear-gradient(to left, transparent, #000 36px);
}
.tool { width: 45px; height: 40px; color: #5b2bd0; }
.faded { opacity: .5; }
.new-tab { margin-left: 4px; }
.list-tabs { margin-left: auto; margin-right: 53px; }
.window-buttons { display: flex; }
.window-buttons button { width: 57px; height: 40px; }

.navbar {
  display: flex;
  align-items: center;
  height: 50px;
  padding: 0 8px 0 7px;
  background: rgba(255, 255, 255, .76);
}
.urlbar {
  flex: 1;
  display: flex;
  align-items: center;
  gap: 14px;
  height: 40px;
  margin: 0 146px 0 147px;
  padding: 0 8px 0 10px;
  border-radius: 5px;
  background: rgba(255, 255, 255, .82);
}
.address { flex: 1; margin-left: -2px; font-size: 16px; line-height: 24px; }
.address span { color: #8c8499; }
.download { color: #12a8a0; }

/* Application */
.app {
  flex: 1;
  display: flex;
  border-top: 3px solid;
  border-image: linear-gradient(90deg, #ff4b4b, #ff8a5c 30%, #ffb865 62%, #fffd80) 1;
}
.sidebar { flex: none; width: 420px; padding: 0 30px; background: #f0f2f6; }
.sidebar-top { display: flex; justify-content: flex-end; height: 120px; padding-top: 19px; }
.sidebar-top button { width: 20px; height: 20px; margin-right: -10px; }

.menu {
  padding: 20px 20px 25px;
  border-radius: 10px;
  background: #fff;
  font-family: "Liberation Sans", Arial, sans-serif;
}
.menu-head { display: flex; align-items: center; gap: 23px; height: 44px; padding-left: 15px; }
.menu-head h2 { font-size: 30px; font-weight: 400; line-height: 40px; }
.menu hr { height: 1px; margin: 11px 0 14px; border: 0; background: #c9c9cb; }
.menu-item {
  display: flex;
  align-items: center;
  gap: 16px;
  height: 51px;
  padding-left: 20px;
  border-radius: 7px;
  font-size: 20px;
  line-height: 30px;
}
.menu-item + .menu-item { margin-top: 10px; }
.menu-current {
  background: #ff4b4b;
  color: #fff;
  font-size: 23px;
  font-weight: 700;
  -webkit-text-stroke: 1px #fff;
}

.main { flex: 1; min-width: 0; padding: 0 100px 38px; }
.main-bar {
  display: flex;
  align-items: center;
  justify-content: flex-end;
  gap: 32px;
  height: 54px;
  margin-right: -76px;
  font-size: 16px;
}
.main h1 { margin: 14px 0 21px; font-size: 49px; font-weight: 700; line-height: 66px; }

.form { padding: 19px; border: 1px solid #d5d6d9; border-radius: 10px; }
.fields { display: grid; grid-template-columns: repeat(3, minmax(0, 1fr)); gap: 20px; }
.field label {
  display: flex;
  align-items: center;
  gap: 6px;
  height: 29px;
  margin-bottom: 6px;
  padding-left: 3px;
  font-size: 16px;
  line-height: 24px;
  white-space: nowrap;
}
.field label svg { width: 18px; height: 18px; }

.number, .choice { height: 50px; border-radius: 10px; background: #f0f2f6; }
.number {
  display: flex;
  border: 1px solid transparent;
  background-clip: padding-box;
}
.number input {
  flex: 1;
  min-width: 0;
  padding: 0 10px 2px;
  border: 0;
  background: none;
  color: inherit;
  font: inherit;
  appearance: textfield;
}
.number input::-webkit-inner-spin-button { appearance: none; margin: 0; }
.number button { width: 40px; }
.number button svg { width: 10px; height: 10px; }
.number button:disabled { color: #d5dae5; }

.choice { display: grid; align-items: center; }
.choice > * { grid-area: 1 / 1; }
.choice select {
  width: 100%;
  height: 50px;
  padding: 0 13px 2px;
  border: 0;
  background: none;
  color: inherit;
  font: inherit;
  appearance: none;
}
.choice svg { justify-self: end; width: 14px; height: 9px; margin-right: 19px; pointer-events: none; }

.submit {
  height: 48px;
  margin-top: 20px;
  padding: 0 14px 2px 15px;
  border: 1px solid #d5d6d9;
  border-radius: 10px;
}
.new-sign { fill: #fff; font: 700 7px "Liberation Sans", sans-serif; text-anchor: middle; }

/* Taskbar */
.taskbar {
  display: grid;
  grid-template-columns: 1fr auto 1fr;
  align-items: center;
  height: 60px;
  border-top: 1px solid #b7b6ac;
  background: linear-gradient(90deg, #ece2dc, #f3e2cf 8%, #ebe2b8 11%, #e2e4bb 14%, #dfdfc3 21%, #d8ddcd 27%, #efdbd3 34%, #ebdbd0 40%, #dedcc8 44%, #eadfbd 52%, #d6e0c5 59%, #d8e4da 75%, #e0e7e5 85%, #e9eaf2 94%, #e8e8f2);
  color: #1c1c1c;
  font-family: "Noto Sans", sans-serif;
  font-size: 15px;
  line-height: 20px;
}
.weather { display: flex; align-items: center; gap: 8px; padding: 0 0 4px 24px; font-size: 14px; }
.muted { color: #5f5d57; }
.apps { display: flex; align-items: center; }
.apps button { position: relative; width: 55px; height: 59px; }
.search {
  display: flex;
  align-items: center;
  gap: 12px;
  width: 274px;
  height: 39px;
  margin: 0 3px 0 5px;
  padding: 0 12px;
  border: 1px solid #cdc6bd;
  border-radius: 20px;
  background: #faf6f2;
}
.search input {
  flex: 1;
  min-width: 0;
  padding: 0;
  border: 0;
  background: none;
  font: inherit;
  font-size: 16px;
}
.search input::placeholder { color: #5b5a58; }
.running::after, .focused::after {
  content: "";
  position: absolute;
  bottom: 5px;
  width: 8px;
  height: 4px;
  border-radius: 2px;
  background: #858477;
}
.focused::after { width: 20px; background: #0a78d4; }
.focused::before {
  content: "";
  position: absolute;
  z-index: -1;
  inset: 5px 8px 5px 3px;
  border: 1px solid #d3d9c8;
  border-radius: 5px;
  background: #eef1e6;
  box-shadow: 4px 0 0 -1px #e6ead9, 4px 0 0 #d3d9c8;
}
.apps .focused { z-index: 0; }
.glyph { fill: #fff; font: 700 13px "Noto Sans", sans-serif; }

.tray { display: flex; align-items: center; justify-content: flex-end; padding: 0 27px 2px 0; }
.sync { margin-left: 23px; }
.lang { margin: 0 22px; text-align: center; }
.status { display: flex; gap: 10px; }
.clock { margin: 0 11px 0 20px; text-align: right; }
```
